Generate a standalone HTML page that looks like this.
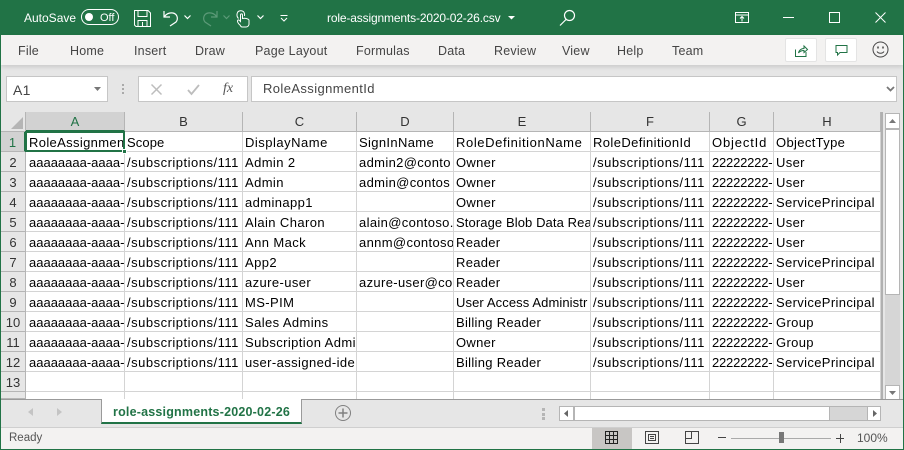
<!DOCTYPE html>
<html><head><meta charset="utf-8"><title>role-assignments-2020-02-26.csv</title>
<style>
*{box-sizing:border-box}
html,body{margin:0;padding:0;width:904px;height:450px;overflow:hidden;background:#e6e6e6;font-family:"Liberation Sans",sans-serif}
.a{position:absolute}
.t{position:absolute;white-space:nowrap;font-size:13px;line-height:16px}
.tb{color:#444;font-size:12.500px;letter-spacing:.2px}
.w{color:#fff}
table{position:absolute;left:26px;top:132px;border-collapse:separate;border-spacing:0;table-layout:fixed;width:855px;background:#fff}
td{height:20px;padding:2px 0 0 2px;border-right:1px solid #d4d4d4;border-bottom:1px solid #d4d4d4;font-size:13px;letter-spacing:.35px;line-height:17px;white-space:nowrap;overflow:hidden;color:#000}
td:nth-child(1){padding-left:3px;letter-spacing:0}
td:nth-child(2),td:nth-child(6){letter-spacing:.5px}
td:nth-child(3){letter-spacing:.4px}
td:nth-child(5){letter-spacing:.3px}
td:nth-child(7){letter-spacing:-.2px}
tr:first-child td:nth-child(1){letter-spacing:.35px}
tr:first-child td:nth-child(2){letter-spacing:.1px}
tr:first-child td:nth-child(3){letter-spacing:.5px}
tr:first-child td:nth-child(5){letter-spacing:.6px}
tr:first-child td:nth-child(6){letter-spacing:.4px}
tr:first-child td:nth-child(7){letter-spacing:.85px}
td.n{letter-spacing:.1px!important}
.ch{position:absolute;top:112px;height:20px;background:#e6e6e6;border-right:1px solid #b5b5b5;border-bottom:1px solid #b5b5b5;text-align:center;font-size:13px;line-height:19px;color:#333}
.rh{position:absolute;left:1px;width:25px;height:20px;background:#e6e6e6;border-right:1px solid #b5b5b5;border-bottom:1px solid #b5b5b5;text-align:center;font-size:13px;line-height:21px;color:#333}
.box{position:absolute;background:#fff;border:1px solid #c6c6c6}
svg{position:absolute;overflow:visible}
</style></head><body>
<div class="a" style="left:0;top:0;width:904px;height:35px;background:#217346"></div>
<div class="a" style="left:0;top:0;width:1px;height:450px;background:#217346;z-index:9"></div>
<div class="a" style="left:903px;top:0;width:1px;height:450px;background:#217346;z-index:9"></div>
<div class="a" style="left:0;top:449px;width:904px;height:1px;background:#217346;z-index:9"></div>

<div class="t w" style="left:24px;top:10px;font-size:12px">AutoSave</div>
<div class="a" style="left:81px;top:9px;width:38px;height:16px;border:1px solid #fff;border-radius:8px"></div>
<div class="a" style="left:85px;top:13px;width:8px;height:8px;background:#fff;border-radius:50%"></div>
<div class="t w" style="left:100px;top:10px;font-size:11px">Off</div>

<svg style="left:134px;top:10px" width="17" height="17" fill="none" stroke="#fff" stroke-width="1"><path d="M.5.500H14L16.500 3V16.500H2L.5 15Z"/><path d="M4 .5V6.500H13V.5M4 16.500V10.500H13V16.500M8.500 12V16"/></svg>
<svg style="left:163px;top:10px" width="17" height="17" fill="none" stroke="#fff" stroke-width="1.200"><path d="M1 1V7H7M1.500 6.500C4 3 7 2.500 10 3C14.500 4 15.500 9 13 12L7 16"/></svg>
<svg style="left:184px;top:15px" width="7" height="5" fill="none" stroke="#fff" stroke-width="1.200"><path d="M.5.500L3.500 3.500L6.500.5"/></svg>
<svg style="left:202px;top:10px" width="17" height="17" fill="none" stroke="#5c9a78" stroke-width="1.200"><path d="M15 1V7H9M14.500 6.500C12 3 9 2.500 6 3C1.500 4 .5 9 3 12L9 16"/></svg>
<svg style="left:223px;top:15px" width="7" height="5" fill="none" stroke="#5c9a78" stroke-width="1.200"><path d="M.5.500L3.500 3.500L6.500.5"/></svg>
<svg style="left:236px;top:10px" width="14" height="18" fill="none" stroke="#fff" stroke-width="1"><path d="M2.500 8.500C0 6 .5 1 4.500 .8C8 .6 9 3.500 8.500 6M4 15C1.500 13 1 11 2 10C3 9.500 4 11 4.500 11.500V5C4.500 3.500 6.500 3.500 6.500 5V8.500C9 8 12 8.500 13 10V14.500C12.500 16 11.500 17 10 17H6C5 17 4.500 16 4 15Z"/></svg>
<svg style="left:257px;top:15px" width="7" height="5" fill="none" stroke="#fff" stroke-width="1.200"><path d="M.5.500L3.500 3.500L6.500.5"/></svg>
<svg style="left:280px;top:15px" width="8" height="7" fill="none" stroke="#fff" stroke-width="1"><path d="M.5.500H7.500M1 3L4 6L7 3"/></svg>

<div class="t w" style="left:327px;top:10px;font-size:12px;letter-spacing:-.15px">role-assignments-2020-02-26.csv</div>
<svg style="left:508px;top:16px" width="7" height="4"><path d="M0 0H7L3.500 3.500Z" fill="#fff"/></svg>
<svg style="left:559px;top:9px" width="17" height="17" fill="none" stroke="#fff" stroke-width="1.200"><circle cx="10.500" cy="6.500" r="5"/><path d="M7 10.500L1 16.500"/></svg>

<svg style="left:735px;top:12px" width="14" height="11" fill="none" stroke="#fff" stroke-width="1"><path d="M.5.500H13.500V10.500H.5ZM.5 3H13.500M7 9.500V4.500M5 6.500L7 4.500L9 6.500"/></svg>
<div class="a" style="left:783px;top:17px;width:11px;height:1px;background:#fff"></div>
<div class="a" style="left:829px;top:12px;width:11px;height:11px;border:1px solid #fff"></div>
<svg style="left:875px;top:12px" width="11" height="11" fill="none" stroke="#fff" stroke-width="1"><path d="M.5.500L10.500 10.500M10.500.5L.5 10.500"/></svg>

<div class="a" style="left:1px;top:35px;width:902px;height:30px;background:#f3f2f1;box-shadow:0 2px 4px rgba(0,0,0,.12)"></div>
<div class="t tb" style="left:18px;top:43px">File</div>
<div class="t tb" style="left:70px;top:43px">Home</div>
<div class="t tb" style="left:134px;top:43px">Insert</div>
<div class="t tb" style="left:195px;top:43px">Draw</div>
<div class="t tb" style="left:255px;top:43px">Page Layout</div>
<div class="t tb" style="left:356px;top:43px">Formulas</div>
<div class="t tb" style="left:438px;top:43px">Data</div>
<div class="t tb" style="left:494px;top:43px">Review</div>
<div class="t tb" style="left:562px;top:43px">View</div>
<div class="t tb" style="left:617px;top:43px">Help</div>
<div class="t tb" style="left:672px;top:43px">Team</div>

<div class="a" style="left:785px;top:38px;width:32px;height:24px;background:#fff;border:1px solid #e4e4e4;border-radius:2px"></div>
<svg style="left:795px;top:45px" width="13" height="12" fill="none" stroke="#217346" stroke-width="1"><path d="M.5 4.500V11.500H11V7M3.500 8C4 5 6.500 3.500 9 3.500V1L12.500 4.500L9 7.500V5.500C7 5.500 5 6 3.500 8Z"/></svg>
<div class="a" style="left:825px;top:38px;width:32px;height:24px;background:#fff;border:1px solid #e4e4e4;border-radius:2px"></div>
<svg style="left:835px;top:45px" width="13" height="11" fill="none" stroke="#217346" stroke-width="1"><path d="M1 .5H12V7.500H5L2.500 10V7.500H1Z"/></svg>
<svg style="left:872px;top:41px" width="17" height="17" fill="none" stroke="#444" stroke-width="1"><circle cx="8.500" cy="8.500" r="7.500"/><path d="M5 10.500C6.500 12.800 10.500 12.800 12 10.500"/><path d="M6 5.500V7.500M11 5.500V7.500" stroke-width="1.500"/></svg>

<div class="box" style="left:6px;top:76px;width:102px;height:26px"></div>
<div class="t" style="left:13px;top:82px;color:#444;font-size:14px;letter-spacing:.3px">A1</div>
<svg style="left:94px;top:87px" width="7" height="4"><path d="M0 0H7L3.500 4Z" fill="#777"/></svg>
<div class="a" style="left:122px;top:84px;width:2px;height:2px;background:#aaa;box-shadow:0 4px #aaa,0 8px #aaa"></div>
<div class="box" style="left:138px;top:76px;width:110px;height:26px"></div>
<svg style="left:151px;top:84px" width="11" height="11" fill="none" stroke="#bdbdbd" stroke-width="1.500"><path d="M.5.500L10.500 10.500M10.500.5L.5 10.500"/></svg>
<svg style="left:187px;top:84px" width="13" height="11" fill="none" stroke="#bdbdbd" stroke-width="1.800"><path d="M1 6L4.500 10L12 1"/></svg>
<div class="t" style="left:223px;top:81px;font-family:'Liberation Serif',serif;font-style:italic;font-size:14px;color:#555">fx</div>
<div class="box" style="left:251px;top:76px;width:646px;height:26px"></div>
<div class="t" style="left:263px;top:81px;color:#444;letter-spacing:.4px">RoleAssignmentId</div>
<svg style="left:886px;top:86px" width="9" height="6" fill="none" stroke="#777" stroke-width="1.800"><path d="M1 1L4.500 4.500L8 1"/></svg>

<div class="a" style="left:1px;top:112px;width:25px;height:20px;background:#e6e6e6;border-right:1px solid #b5b5b5;border-bottom:1px solid #b5b5b5"></div>
<svg style="left:11px;top:117px" width="12" height="12"><path d="M12 0V12H0Z" fill="#b5b5b5"/></svg>

<div class="ch" style="left:26px;width:99px;background:#d2d2d2;color:#217346;border-bottom:2px solid #217346">A</div>
<div class="ch" style="left:125px;width:118px">B</div>
<div class="ch" style="left:243px;width:114px">C</div>
<div class="ch" style="left:357px;width:97px">D</div>
<div class="ch" style="left:454px;width:137px">E</div>
<div class="ch" style="left:591px;width:119px">F</div>
<div class="ch" style="left:710px;width:64px">G</div>
<div class="ch" style="left:774px;width:107px">H</div>

<div class="rh" style="top:132px;background:#d2d2d2;color:#217346;border-right:2px solid #217346">1</div>
<div class="rh" style="top:152px">2</div>
<div class="rh" style="top:172px">3</div>
<div class="rh" style="top:192px">4</div>
<div class="rh" style="top:212px">5</div>
<div class="rh" style="top:232px">6</div>
<div class="rh" style="top:252px">7</div>
<div class="rh" style="top:272px">8</div>
<div class="rh" style="top:292px">9</div>
<div class="rh" style="top:312px">10</div>
<div class="rh" style="top:332px">11</div>
<div class="rh" style="top:352px">12</div>
<div class="rh" style="top:372px">13</div>
<div class="rh" style="top:392px;height:7px;overflow:hidden">14</div>

<div class="a" style="left:26px;top:132px;width:855px;height:267px;overflow:hidden">
<table style="left:0;top:0">
<colgroup><col style="width:99px"><col style="width:118px"><col style="width:114px"><col style="width:97px"><col style="width:137px"><col style="width:119px"><col style="width:64px"><col style="width:107px"></colgroup>
<tr><td>RoleAssignmen</td><td>Scope</td><td>DisplayName</td><td>SignInName</td><td>RoleDefinitionName</td><td>RoleDefinitionId</td><td>ObjectId</td><td>ObjectType</td></tr>
<tr><td>aaaaaaaa-aaaa-</td><td>/subscriptions/111</td><td>Admin 2</td><td>admin2@conto</td><td>Owner</td><td>/subscriptions/111</td><td>22222222-</td><td>User</td></tr>
<tr><td>aaaaaaaa-aaaa-</td><td>/subscriptions/111</td><td>Admin</td><td>admin@contos</td><td>Owner</td><td>/subscriptions/111</td><td>22222222-</td><td>User</td></tr>
<tr><td>aaaaaaaa-aaaa-</td><td>/subscriptions/111</td><td>adminapp1</td><td></td><td>Owner</td><td>/subscriptions/111</td><td>22222222-</td><td>ServicePrincipal</td></tr>
<tr><td>aaaaaaaa-aaaa-</td><td>/subscriptions/111</td><td>Alain Charon</td><td>alain@contoso.</td><td class="n">Storage Blob Data Rea</td><td>/subscriptions/111</td><td>22222222-</td><td>User</td></tr>
<tr><td>aaaaaaaa-aaaa-</td><td>/subscriptions/111</td><td>Ann Mack</td><td>annm@contoso</td><td>Reader</td><td>/subscriptions/111</td><td>22222222-</td><td>User</td></tr>
<tr><td>aaaaaaaa-aaaa-</td><td>/subscriptions/111</td><td>App2</td><td></td><td>Reader</td><td>/subscriptions/111</td><td>22222222-</td><td>ServicePrincipal</td></tr>
<tr><td>aaaaaaaa-aaaa-</td><td>/subscriptions/111</td><td>azure-user</td><td>azure-user@co</td><td>Reader</td><td>/subscriptions/111</td><td>22222222-</td><td>User</td></tr>
<tr><td>aaaaaaaa-aaaa-</td><td>/subscriptions/111</td><td>MS-PIM</td><td></td><td class="n">User Access Administr</td><td>/subscriptions/111</td><td>22222222-</td><td>ServicePrincipal</td></tr>
<tr><td>aaaaaaaa-aaaa-</td><td>/subscriptions/111</td><td>Sales Admins</td><td></td><td>Billing Reader</td><td>/subscriptions/111</td><td>22222222-</td><td>Group</td></tr>
<tr><td>aaaaaaaa-aaaa-</td><td>/subscriptions/111</td><td>Subscription Admi</td><td></td><td>Owner</td><td>/subscriptions/111</td><td>22222222-</td><td>Group</td></tr>
<tr><td>aaaaaaaa-aaaa-</td><td>/subscriptions/111</td><td>user-assigned-ide</td><td></td><td>Billing Reader</td><td>/subscriptions/111</td><td>22222222-</td><td>ServicePrincipal</td></tr>
<tr><td></td><td></td><td></td><td></td><td></td><td></td><td></td><td></td></tr>
<tr><td></td><td></td><td></td><td></td><td></td><td></td><td></td><td></td></tr>
</table>
</div>
<div class="a" style="left:25px;top:131px;width:100px;height:21px;border:2px solid #217346"></div>
<div class="a" style="left:122px;top:149px;width:5px;height:5px;background:#217346;border:1px solid #fff"></div>
<div class="a" style="left:881px;top:112px;width:2px;height:287px;background:#b0b0b0"></div>

<div class="a" style="left:885px;top:113px;width:15px;height:286px;background:#d6d6d6"></div>
<div class="a" style="left:885px;top:113px;width:15px;height:16px;background:#fff;border:1px solid #b5b5b5"></div>
<svg style="left:889px;top:119px" width="7" height="4"><path d="M3.500 0L7 4H0Z" fill="#777"/></svg>
<div class="a" style="left:885px;top:129px;width:15px;height:166px;background:#fff;border:1px solid #b5b5b5"></div>
<div class="a" style="left:885px;top:385px;width:15px;height:15px;background:#fff;border:1px solid #b5b5b5"></div>
<svg style="left:889px;top:391px" width="7" height="4"><path d="M0 0H7L3.500 4Z" fill="#777"/></svg>

<div class="a" style="left:1px;top:399px;width:902px;height:1px;background:#9a9a9a"></div>
<div class="a" style="left:101px;top:399px;width:201px;height:25px;background:#fff;border-left:1px solid #9a9a9a;border-right:1px solid #9a9a9a;border-bottom:2px solid #217346"></div>
<div class="t" style="left:113px;top:404px;color:#217346;font-weight:bold;font-size:12.500px;letter-spacing:.2px">role-assignments-2020-02-26</div>
<svg style="left:28px;top:408px" width="5" height="8"><path d="M5 0V8L0 4Z" fill="#c4c4c4"/></svg>
<svg style="left:57px;top:408px" width="5" height="8"><path d="M0 0V8L5 4Z" fill="#c4c4c4"/></svg>
<svg style="left:335px;top:405px" width="16" height="16" fill="none" stroke="#808080"><circle cx="8" cy="8" r="7.500"/><path d="M8 3.500V12.500M3.500 8H12.500" stroke-width="1.500"/></svg>
<div class="a" style="left:542px;top:408px;width:3px;height:3px;background:#b5b5b5;box-shadow:0 5px #b5b5b5,0 9px #b5b5b5"></div>
<div class="a" style="left:559px;top:406px;width:322px;height:15px;background:#d6d6d6;border:1px solid #b5b5b5"></div>
<div class="a" style="left:559px;top:406px;width:15px;height:15px;background:#fff;border:1px solid #b5b5b5"></div>
<svg style="left:564px;top:410px" width="4" height="7"><path d="M4 0V7L0 3.500Z" fill="#666"/></svg>
<div class="a" style="left:574px;top:406px;width:256px;height:15px;background:#fff;border:1px solid #b5b5b5"></div>
<div class="a" style="left:867px;top:406px;width:14px;height:15px;background:#fff;border:1px solid #b5b5b5"></div>
<svg style="left:873px;top:410px" width="4" height="7"><path d="M0 0V7L4 3.500Z" fill="#666"/></svg>

<div class="a" style="left:1px;top:427px;width:902px;height:22px;background:#f3f2f1;border-top:1px solid #cfcfcf"></div>
<div class="t" style="left:9px;top:430px;color:#555;font-size:11.500px">Ready</div>
<div class="a" style="left:592px;top:428px;width:40px;height:21px;background:#c8c6c4"></div>
<svg style="left:605px;top:431px" width="13" height="13" fill="none" stroke="#222"><path d="M.5.500H12.500V12.500H.5ZM.5 4.500H12.500M.5 8.500H12.500M4.500.5V12.500M8.500.5V12.500"/></svg>
<svg style="left:645px;top:431px" width="14" height="13" fill="none" stroke="#444"><path d="M.5.500H13.500V12.500H.5ZM3.500 3.500H10.500V9.500H3.500ZM5 5.500H9M5 7.500H9"/></svg>
<svg style="left:685px;top:431px" width="14" height="13" fill="none" stroke="#444"><path d="M.5.500H13.500V12.500H.5ZM.5 7.500H6.500V.5"/></svg>
<div class="a" style="left:718px;top:437px;width:8px;height:1px;background:#444"></div>
<div class="a" style="left:731px;top:438px;width:100px;height:1px;background:#aaa"></div>
<div class="a" style="left:779px;top:432px;width:5px;height:11px;background:#777"></div>
<div class="a" style="left:836px;top:438px;width:8px;height:1px;background:#444"></div>
<div class="a" style="left:839.500px;top:434px;width:1px;height:9px;background:#444"></div>
<div class="t" style="left:857px;top:430px;color:#555;font-size:12px">100%</div>
</body></html>
